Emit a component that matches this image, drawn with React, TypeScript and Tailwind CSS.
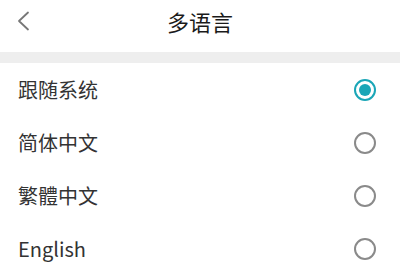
import { useState } from "react";

const languages = ["跟随系统", "简体中文", "繁體中文", "English"];

function Radio({ checked }: { checked: boolean }) {
  return checked ? (
    <div className="w-[22px] h-[22px] rounded-full border-[2px] border-[#1aa6b7] flex items-center justify-center">
      <div className="w-[12px] h-[12px] rounded-full bg-[#1aa6b7]" />
    </div>
  ) : (
    <div className="w-[22px] h-[22px] rounded-full border-[2px] border-[#8a8a8a]" />
  );
}

export default function App() {
  const [selected, setSelected] = useState(0);

  return (
    <div
      className="w-[400px] h-[263px] overflow-hidden bg-white text-[#333]"
      style={{ fontFamily: '"Noto Sans CJK SC", "Noto Sans", sans-serif' }}
    >
      {/* header */}
      <div className="relative h-[52px] flex items-center justify-center">
        <button className="absolute left-[16px] top-[11px]">
          <svg width="14" height="20" viewBox="0 0 14 20" fill="none">
            <path d="M12 1.5 L3 10 L12 18.5" stroke="#777" strokeWidth="1.8" strokeLinecap="round" strokeLinejoin="round" />
          </svg>
        </button>
        <h1 className="text-[22px] text-[#1a1a1a] -mt-[10px]">多语言</h1>
      </div>

      <div className="h-[11px] bg-[#eeeeee]" />

      {/* list */}
      <div className="flex flex-col">
        {languages.map((lang, i) => (
          <div
            key={lang}
            onClick={() => setSelected(i)}
            className="h-[53px] flex items-center justify-between pl-[18px] pr-[24px]"
          >
            <span className="text-[20px] text-[#333]">{lang}</span>
            <Radio checked={selected === i} />
          </div>
        ))}
      </div>
    </div>
  );
}
